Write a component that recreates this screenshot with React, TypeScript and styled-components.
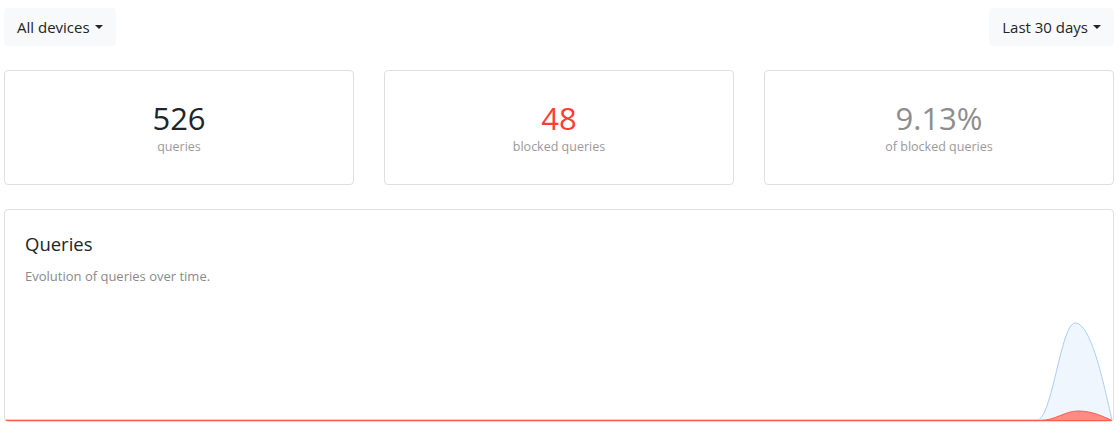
import React from "react";
import styled, { createGlobalStyle } from "styled-components";

const Global = createGlobalStyle`
  html, body { margin: 0; padding: 0; background: #fff; }
  body {
    font-family: "Open Sans", "Noto Sans", sans-serif;
    color: #212529;
    -webkit-font-smoothing: antialiased;
  }
  * { box-sizing: border-box; }
`;

const Page = styled.div`
  width: 1110px;
  margin-left: 4px;
  padding-top: 8px;
`;

const Toolbar = styled.div`
  display: flex;
  justify-content: space-between;
  align-items: center;
`;

const DropButton = styled.button`
  display: inline-flex;
  align-items: center;
  height: 38px;
  padding: 0 12px;
  font-family: inherit;
  font-size: 15px;
  color: #212529;
  background: #f8f9fa;
  border: 1px solid #f8f9fa;
  border-radius: 4px;
  cursor: pointer;
  &::after {
    content: "";
    display: inline-block;
    margin-left: 5px;
    border-top: 4.5px solid #212529;
    border-left: 4px solid transparent;
    border-right: 4px solid transparent;
  }
`;

const StatsRow = styled.div`
  display: grid;
  grid-template-columns: repeat(3, 1fr);
  column-gap: 30px;
  margin-top: 24px;
`;

const Card = styled.div`
  border: 1px solid #dfdfdf;
  border-radius: 4px;
  background: #fff;
`;

const StatBody = styled.div`
  height: 113px;
  display: flex;
  flex-direction: column;
  align-items: center;
  justify-content: center;
`;

const StatValue = styled.div<{ $tone: "dark" | "red" | "grey" }>`
  font-size: 31px;
  line-height: 38px;
  font-weight: 400;
  color: ${(p) => (p.$tone === "red" ? "#ff3d33" : p.$tone === "grey" ? "#8d8d8d" : "#212529")};
`;

const StatLabel = styled.div`
  font-size: 12.5px;
  line-height: 20px;
  color: #9a9a9a;
`;

const ChartCard = styled(Card)`
  margin-top: 24px;
  overflow: hidden;
`;

const ChartHeader = styled.div`
  padding: 22px 20px 0;
`;

const ChartTitle = styled.h5`
  margin: 0;
  font-size: 18.5px;
  line-height: 24px;
  font-weight: 400;
  color: #212529;
`;

const ChartSubtitle = styled.p`
  margin: 10px 0 0;
  font-size: 13px;
  line-height: 20px;
  color: #8a8a8a;
`;

const ChartSvg = styled.svg`
  display: block;
  width: 100%;
  height: 120px;
  margin-top: 15px;
`;

const stats = [
  { value: "526", label: "queries", tone: "dark" as const },
  { value: "48", label: "blocked queries", tone: "red" as const },
  { value: "9.13%", label: "of blocked queries", tone: "grey" as const },
];

export default function App() {
  return (
    <>
      <Global />
      <Page>
        <Toolbar>
          <DropButton>All devices</DropButton>
          <DropButton>Last 30 days</DropButton>
        </Toolbar>
        <StatsRow>
          {stats.map((s) => (
            <Card key={s.label}>
              <StatBody>
                <StatValue $tone={s.tone}>{s.value}</StatValue>
                <StatLabel>{s.label}</StatLabel>
              </StatBody>
            </Card>
          ))}
        </StatsRow>
        <ChartCard>
          <ChartHeader>
            <ChartTitle>Queries</ChartTitle>
            <ChartSubtitle>Evolution of queries over time.</ChartSubtitle>
          </ChartHeader>
          <ChartSvg viewBox="0 0 1108 120" preserveAspectRatio="none">
            <path
              d="M0 119 L1032 119 C1047 119, 1056 22, 1070 22 C1086 22, 1098 80, 1107 119 Z"
              fill="#f0f6fd"
              stroke="#a9cdf4"
              strokeWidth="1"
            />
            <path
              d="M0 119.5 L1035 119.5 C1050 119.5, 1060 110, 1073 110 C1088 110, 1099 116, 1107 119.5 Z"
              fill="#ff8c84"
              stroke="#ff5a52"
              strokeWidth="1"
            />
          </ChartSvg>
        </ChartCard>
      </Page>
    </>
  );
}
